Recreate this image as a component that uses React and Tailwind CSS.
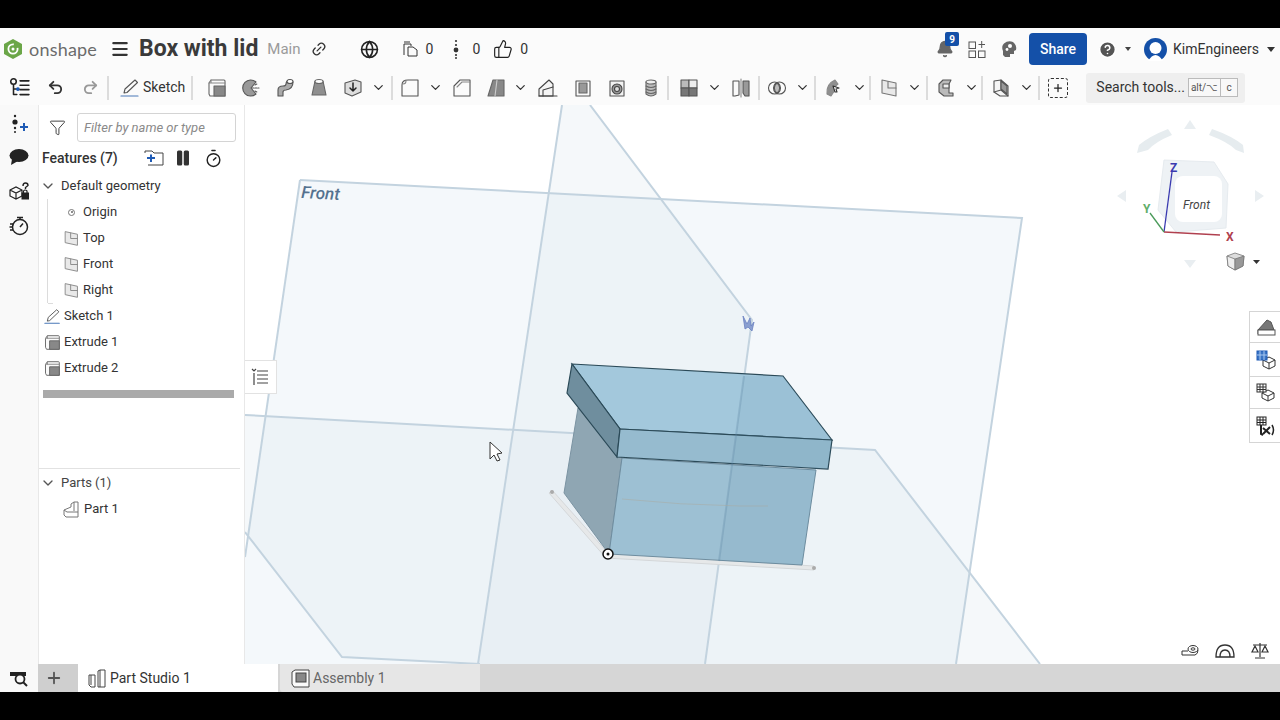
import React from "react";
import { ChevronDown, Undo2, Redo2, Menu, Link2, Globe, ThumbsUp, Filter, Pause, Timer, Bell, CircleHelp, Plus } from "lucide-react";

const Ic = ({ s = 20, className = "", children }) => (
  <svg width={s} height={s} viewBox="0 0 20 20" fill="none" stroke="currentColor" strokeWidth="1.1" strokeLinejoin="round" strokeLinecap="round" className={"shrink-0 " + className}>
    {children}
  </svg>
);

const Chev = () => <ChevronDown size={15} strokeWidth={2} className="text-[#333] shrink-0" />;
const Sep = () => <div className="w-[2px] h-[24px] bg-[#dcdcdc] shrink-0" />;

const ExtrudeIcon = ({ s = 20 }) => (
  <Ic s={s}>
    <path d="M2 5 L4 2 H17 Q18 2 18 3 V18 H3 L2 16 Z" fill="#fafafa" stroke="#666" />
    <path d="M4 2 V5 H2 M4 5 H18" stroke="#888" />
    <rect x="7" y="8" width="11" height="10" fill="#888" stroke="#666" />
  </Ic>
);
const RevolveIcon = () => (
  <Ic>
    <path d="M15 4 A8 8 0 1 0 15 16 L10 10 Z" fill="#999" stroke="#555" />
    <path d="M11 10 h7 M14 7 l2 -1 M14 13 l2 1" stroke="#555" strokeDasharray="2 1" />
  </Ic>
);
const SweepIcon = () => (
  <Ic>
    <path d="M3 18 V12 Q3 8 8 8 Q11 8 11 6 Q11 3 14 2 L18 4 Q18 11 11 12 Q8 12 8 14 V18 Z" fill="#aaa" stroke="#555" />
    <ellipse cx="15" cy="3.5" rx="3" ry="2" fill="#fff" stroke="#555" />
  </Ic>
);
const LoftIcon = () => (
  <Ic>
    <path d="M6 3 H14 L17 17 H3 Z" fill="#8f8f8f" stroke="#666" />
    <ellipse cx="10" cy="3.5" rx="4" ry="2" fill="#fff" stroke="#666" />
  </Ic>
);
const ThickenIcon = () => (
  <Ic>
    <path d="M2 5 L12 2 L18 4 V14 L9 18 L2 15 Z" fill="#ddd" stroke="#555" />
    <path d="M10 5 v8 M7 10 l3 3 l3 -3" stroke="#222" strokeWidth="1.5" />
  </Ic>
);
const FilletIcon = () => (
  <Ic>
    <path d="M2 18 V7 Q2 2 8 2 H18 V18 Z" stroke="#555" />
    <path d="M3 6 Q6 6 6 3" stroke="#888" />
  </Ic>
);
const ChamferIcon = () => (
  <Ic>
    <path d="M2 18 V8 L8 2 H18 V18 Z" stroke="#555" />
    <path d="M5 9 L10 4 H18" stroke="#888" />
  </Ic>
);
const DraftIcon = () => (
  <Ic>
    <path d="M7 2 H18 V18 H2 Z" fill="#888" stroke="#666" />
    <path d="M11 2 L9 18" stroke="#ccc" />
  </Ic>
);
const RibIcon = () => (
  <Ic>
    <path d="M1 18 V11 L11 2 L15 6 V18 Z" fill="#f5f5f5" stroke="#444" />
    <path d="M5 18 V12 L15 9" fill="none" stroke="#444" />
    <path d="M1 18 H19" stroke="#444" />
  </Ic>
);
const ShellIcon = () => (
  <Ic>
    <path d="M3 3 H17 V18 H3 Z" fill="#fafafa" stroke="#555" />
    <rect x="6" y="5" width="8" height="10" fill="#999" stroke="#666" />
  </Ic>
);
const HoleIcon = () => (
  <Ic>
    <path d="M3 3 H17 V18 H3 Z" fill="#f2f2f2" stroke="#555" />
    <circle cx="10" cy="11" r="5" fill="#999" stroke="#444" />
    <circle cx="10" cy="11" r="2.5" fill="#ddd" stroke="#444" />
  </Ic>
);
const HelixIcon = () => (
  <Ic>
    <path d="M5 4 V16 Q10 20 15 16 V4" fill="#bbb" stroke="#666" />
    <ellipse cx="10" cy="4" rx="5" ry="2" fill="#eee" stroke="#666" />
    <path d="M5 8 Q10 11 15 8 M5 11 Q10 14 15 11 M5 14 Q10 17 15 14" stroke="#666" />
  </Ic>
);
const PatternIcon = () => (
  <Ic>
    <rect x="2" y="2" width="8" height="8" fill="#bbb" stroke="#555" />
    <rect x="10" y="2" width="8" height="8" fill="#eee" stroke="#555" />
    <rect x="2" y="10" width="8" height="8" fill="#777" stroke="#555" />
    <rect x="10" y="10" width="8" height="8" fill="#777" stroke="#555" />
  </Ic>
);
const MirrorIcon = () => (
  <Ic>
    <path d="M2 3 H8 V17 L4 18 H2 Z" fill="#fafafa" stroke="#555" />
    <path d="M12 3 H18 V18 H14 L12 15 Z" fill="#999" stroke="#555" />
    <path d="M10 1 V19" stroke="#888" />
  </Ic>
);
const BooleanIcon = () => (
  <Ic>
    <circle cx="7.5" cy="10" r="6" stroke="#555" />
    <circle cx="12.5" cy="10" r="6" stroke="#555" />
    <path d="M10 5 A6 6 0 0 1 10 15 A6 6 0 0 1 10 5" fill="#bbb" stroke="#555" />
  </Ic>
);
const SplitIcon = () => (
  <Ic>
    <path d="M3 16 Q2 6 11 2 L14 6 Q10 9 11 12 L7 18 Z" fill="#8f8f8f" stroke="#888" />
    <path d="M9 8 L15 10 L12 11 L13 14 L11 14 L10 11 Z" fill="#fff" stroke="#333" />
  </Ic>
);
const PlaneIcon = ({ s = 20, tint = "#777" }) => (
  <Ic s={s}>
    <path d="M3 2 L17 5 V18 L3 15 Z" fill="#e9e9e9" stroke={tint} />
    <path d="M9 3.5 V10 H17" stroke={tint} />
  </Ic>
);
const TransformIcon = () => (
  <Ic>
    <path d="M3 6 L7 2 H15 L13 6 V15 L17 15 V18 H8 L3 14 Z" fill="#bbb" stroke="#555" />
    <path d="M7 6 H13 V10 H7 Z" fill="#eee" stroke="#555" />
  </Ic>
);
const ReplaceIcon = () => (
  <Ic>
    <path d="M3 3 L10 2 L17 8 V18 L9 18 L3 14 Z" fill="#f5f5f5" stroke="#555" />
    <path d="M10 2 V12 L17 18 M10 12 L3 14" stroke="#555" />
    <path d="M10 3 L16 8 V16 L10 11 Z" fill="#999" stroke="#555" />
  </Ic>
);
const TreeIcon = () => (
  <Ic s={22}>
    <circle cx="5" cy="4" r="2.5" stroke="#222" strokeWidth="1.4" />
    <path d="M5 7 V16 H8 M5 11 H8" stroke="#222" strokeWidth="1.4" />
    <circle cx="9" cy="11" r="1.2" fill="#1f5bb5" stroke="#1f5bb5" />
    <path d="M11 3.5 H19 M11 7.5 H19 M11 11.5 H19 M11 16 H19" stroke="#222" strokeWidth="1.5" />
  </Ic>
);
const SketchIcon = ({ s = 20 }) => (
  <Ic s={s}>
    <path d="M4 15 L5 11 L15 2 L17.5 4.5 L7 14.5 Z" stroke="#555" />
    <path d="M1 18 H18" stroke="#4a78b8" strokeWidth="1.2" />
  </Ic>
);

const Tool = ({ children, w = "w-[34px]" }) => <div className={"flex items-center justify-center shrink-0 " + w}>{children}</div>;

// icon + dropdown chevron, the groups right of the boolean tool share this spacing
const Group = ({ icon, mr = "mr-[2px]" }) => (
  <>
    <Tool w="w-[20px]">{icon}</Tool>
    <Tool w={"w-[16px] ml-[7px] " + mr}><Chev /></Tool>
  </>
);

const Header = () => (
  <div className="h-[42px] shrink-0 flex items-center bg-[#fbfbfb] text-[#333]">
    <svg width="20" height="20" viewBox="0 0 20 20" className="ml-[3px] shrink-0">
      <path d="M10 0 L19 5 V15 L10 20 L1 15 V5 Z" fill="#6ba648" />
      <circle cx="10" cy="10" r="4.6" fill="none" stroke="#fff" strokeWidth="1.8" strokeDasharray="22 5" />
      <circle cx="10" cy="10" r="1.5" fill="#fff" />
    </svg>
    <span className="ml-[6px] w-[70px] text-[18px] tracking-[0.2px] text-[#6b6b6b] font-['Lato',sans-serif]">onshape</span>
    <Menu size={20} strokeWidth={2.6} className="ml-[11px] text-[#333]" />
    <span className="ml-[9px] text-[23px] font-bold text-[#3a3a3a] whitespace-nowrap">Box with lid</span>
    <span className="ml-[9px] text-[15px] text-[#9a9a9a]">Main</span>
    <Link2 size={16} className="ml-[10px] -rotate-45 text-[#333]" />
    <Globe size={19} className="ml-[33px] text-[#222]" />
    <svg width="18" height="18" viewBox="0 0 18 18" fill="none" stroke="#333" className="ml-[22px] shrink-0">
      <path d="M3 15 V4 H10 V6 M7 7 H12 L16 10 V16 H7 Z" />
      <path d="M3 2 H9" />
    </svg>
    <span className="ml-[7px] text-[14px]">0</span>
    <svg width="6" height="20" viewBox="0 0 6 20" className="ml-[20px] shrink-0">
      <circle cx="3" cy="2" r="1.1" fill="#333" />
      <circle cx="3" cy="6" r="1.1" fill="#333" />
      <circle cx="3" cy="11" r="2.4" fill="#333" />
      <circle cx="3" cy="16" r="1.1" fill="#333" />
      <circle cx="3" cy="19" r="1" fill="#333" />
    </svg>
    <span className="ml-[13px] text-[14px]">0</span>
    <ThumbsUp size={20} strokeWidth={1.4} className="ml-[13px] text-[#222]" />
    <span className="ml-[7px] text-[14px]">0</span>

    <div className="ml-auto flex items-center">
      <div className="relative">
        <Bell size={18} fill="#666" className="text-[#666]" />
        <span className="absolute -top-[8px] left-[9px] w-[14px] h-[14px] rounded-[2px] bg-[#1450a8] text-white text-[10px] font-bold flex items-center justify-center">9</span>
      </div>
      <svg width="18" height="18" viewBox="0 0 18 18" fill="none" stroke="#555" className="ml-[14px] shrink-0">
        <rect x="1" y="2" width="6.5" height="6.5" />
        <rect x="1" y="11" width="6.5" height="6.5" />
        <rect x="10.5" y="11" width="6.5" height="6.5" />
        <path d="M13.7 1 V8 M10.5 4.5 H17" />
      </svg>
      <svg width="18" height="18" viewBox="0 0 18 18" className="ml-[14px] shrink-0">
        <path d="M3 15 V11 Q1 6 4 3.5 Q8 0 13 2 Q17 5 16 10 L14 11 V14 L10 14 V17 H5 Z" fill="#666" />
        <circle cx="10" cy="6" r="2" fill="#fff" />
        <circle cx="7" cy="9.5" r="1.4" fill="#fff" />
      </svg>
      <button className="ml-[11px] w-[58px] h-[32px] rounded-[4px] bg-[#1450a8] text-white text-[14px] font-medium">Share</button>
      <CircleHelp size={19} fill="#555" className="ml-[11px] text-white" />
      <span className="ml-[8px] w-0 h-0 border-x-[3.5px] border-x-transparent border-t-[4px] border-t-[#444]" />
      <svg width="23" height="23" viewBox="0 0 23 23" className="ml-[13px] shrink-0">
        <circle cx="11.5" cy="11.5" r="11.5" fill="#1450a8" />
        <circle cx="11.5" cy="10" r="6" fill="#fff" />
        <path d="M4 23 Q11.5 11 19 23 Z" fill="#fff" />
      </svg>
      <span className="ml-[6px] text-[14px] text-[#333]">KimEngineers</span>
      <span className="ml-[8px] mr-[5px] w-0 h-0 border-x-[4px] border-x-transparent border-t-[5px] border-t-[#333]" />
    </div>
  </div>
);

const Toolbar = () => (
  <div className="h-[35px] shrink-0 flex items-center bg-[#fbfbfb]">
    <Tool w="w-[38px]"><TreeIcon /></Tool>
    <Undo2 size={17} strokeWidth={2.6} className="ml-[9px] text-[#333]" />
    <Redo2 size={17} strokeWidth={2.6} className="ml-[18px] text-[#999]" />
    <div className="ml-[8px]"><Sep /></div>
    <div className="ml-[11px]"><SketchIcon /></div>
    <span className="ml-[3px] text-[14px] text-[#333]">Sketch</span>
    <div className="ml-[6px] mr-[7px]"><Sep /></div>
    <Tool><ExtrudeIcon /></Tool>
    <Tool><RevolveIcon /></Tool>
    <Tool><SweepIcon /></Tool>
    <Tool><LoftIcon /></Tool>
    <Tool><ThickenIcon /></Tool>
    <Tool w="w-[16px]"><Chev /></Tool>
    <div className="ml-[5px] mr-[7px]"><Sep /></div>
    <Tool w="w-[20px]"><FilletIcon /></Tool>
    <Tool w="w-[30px]"><Chev /></Tool>
    <Tool w="w-[24px]"><ChamferIcon /></Tool>
    <div className="w-[12px]" />
    <Tool w="w-[20px]"><DraftIcon /></Tool>
    <Tool w="w-[28px]"><Chev /></Tool>
    <div className="w-[2px]" />
    <Tool w="w-[24px]"><RibIcon /></Tool>
    <Tool w="w-[46px]"><ShellIcon /></Tool>
    <Tool w="w-[22px]"><HoleIcon /></Tool>
    <Tool w="w-[46px]"><HelixIcon /></Tool>
    <div className="-ml-[7px] mr-[10px]"><Sep /></div>
    <Tool w="w-[20px]"><PatternIcon /></Tool>
    <Tool w="w-[30px]"><Chev /></Tool>
    <Tool w="w-[24px]"><MirrorIcon /></Tool>
    <div className="ml-[5px] mr-[7px]"><Sep /></div>
    <Group icon={<BooleanIcon />} mr="mr-[4px]" />
    <Sep />
    <div className="w-[8px]" />
    <Group icon={<SplitIcon />} />
    <Sep />
    <div className="w-[8px]" />
    <Group icon={<PlaneIcon />} mr="mr-[4px]" />
    <Sep />
    <div className="w-[8px]" />
    <Group icon={<TransformIcon />} />
    <Sep />
    <div className="w-[8px]" />
    <Group icon={<ReplaceIcon />} mr="mr-[4px]" />
    <Sep />
    <div className="w-[8px] shrink-0" />
    <div className="relative w-[20px] h-[20px] border border-dashed border-[#333] rounded-[3px] flex items-center justify-center shrink-0">
      <Plus size={12} strokeWidth={2.5} className="text-[#222]" />
    </div>
    <div className="ml-[18px] w-[159px] h-[30px] rounded-[3px] bg-[#efefef] flex items-center pl-[10px] text-[14px] text-[#333] shrink-0">
      <span>Search tools...</span>
      <span className="ml-[3px] h-[19px] px-[2px] border border-[#bbb] bg-[#f8f8f8] text-[10px] text-[#555] flex items-center">alt/⌥</span>
      <span className="h-[19px] w-[17px] border border-l-0 border-[#bbb] bg-[#f8f8f8] text-[10px] text-[#555] flex items-center justify-center">c</span>
    </div>
  </div>
);

const Rail = () => (
  <div className="w-[38px] shrink-0 bg-[#f9f9f9] flex flex-col items-center text-[#222] pt-[8px]">
    <svg width="20" height="20" viewBox="0 0 20 20" className="shrink-0">
      <circle cx="6" cy="3" r="1.2" fill="#222" />
      <circle cx="6" cy="9" r="2.6" fill="#222" />
      <circle cx="6" cy="15" r="1.2" fill="#222" />
      <circle cx="6" cy="19" r="1" fill="#222" />
      <path d="M11 14 H19 M15 10 V18" stroke="#1f5bb5" strokeWidth="2" />
    </svg>
    <svg width="20" height="18" viewBox="0 0 20 18" className="mt-[15px] shrink-0">
      <ellipse cx="10" cy="7.5" rx="9.5" ry="6.5" fill="#222" />
      <path d="M3 11 L2 17 L9 13 Z" fill="#222" />
    </svg>
    <svg width="22" height="22" viewBox="0 0 22 22" fill="none" stroke="#222" className="mt-[15px] shrink-0">
      <path d="M2 9 L8 6 L14 9 V15 L8 18 L2 15 Z M2 9 L8 12 L14 9 M8 12 V18" strokeWidth="1.2" />
      <rect x="14" y="12" width="6.5" height="6" fill="#222" />
      <path d="M15.5 12 V10 Q17 8 19 10 V12" strokeWidth="1.2" />
      <path d="M15 5 Q15 2 17.5 2 Q20 2 20 4.5 L17.5 6.5 V8" strokeWidth="1.4" />
    </svg>
    <svg width="20" height="20" viewBox="0 0 20 20" fill="none" stroke="#222" strokeWidth="1.5" className="mt-[13px] shrink-0">
      <circle cx="11" cy="11" r="7.5" />
      <path d="M8 1.5 H14 M11 1.5 V3.5 M11 11 L14 7.5 M1 8 H4 M0.5 11 H3.5 M1 14 H4" />
    </svg>
  </div>
);

const Row = ({ icon, label, ml = "ml-[5px]", text = "ml-[3px]" }) => (
  <div className={"h-[26px] flex items-center text-[13px] text-[#333] " + ml}>
    {icon}
    <span className={text}>{label}</span>
  </div>
);

const Panel = () => (
  <div className="w-[207px] shrink-0 bg-white border-x border-[#e8e8e8] flex flex-col">
    <div className="h-[37px] flex items-center shrink-0 pt-[8px]">
      <Filter size={17} strokeWidth={1.3} className="ml-[10px] text-[#333]" />
      <div className="ml-[11px] w-[159px] h-[29px] border border-[#d4d4d4] rounded-[3px] flex items-center pl-[6px] text-[13px] italic text-[#8a8a8a]">Filter by name or type</div>
    </div>
    <div className="h-[30px] shrink-0 mt-[1px] flex items-center pl-[3px] text-[#333]">
      <span className="w-[100px] text-[14px] font-medium">Features (7)</span>
      <svg width="20" height="18" viewBox="0 0 20 18" fill="none" stroke="#444" className="ml-[2px] shrink-0">
        <path d="M1 4 V2 H8 L10 4 H19 V16 H4" />
        <path d="M3 9 H11 M7 5.5 V13" stroke="#1f5bb5" strokeWidth="2" />
      </svg>
      <Pause size={18} fill="#333" className="ml-[10px] text-[#333]" />
      <Timer size={19} strokeWidth={1.8} className="ml-[12px] text-[#222]" />
    </div>
    <div className="h-[26px] shrink-0 flex items-center text-[13px] text-[#333]">
      <ChevronDown size={16} strokeWidth={2} className="ml-[1px] text-[#555]" />
      <span className="ml-[5px]">Default geometry</span>
    </div>
    <div className="relative ml-[8px] h-[104px] shrink-0 border-l border-[#dcdcdc]">
      <div className="absolute left-0 -bottom-[1px] w-[5px] h-px bg-[#dcdcdc]" />
      <div className="ml-[16px] h-[26px] flex items-center text-[13px] text-[#333]">
        <span className="w-[7px] h-[7px] rounded-full border border-[#777] flex items-center justify-center shrink-0 ml-[4px]"><span className="w-[2px] h-[2px] rounded-full bg-[#666]" /></span>
        <span className="ml-[8px]">Origin</span>
      </div>
      <Row icon={<PlaneIcon s={17} tint="#888" />} label="Top" ml="ml-[15px]" />
      <Row icon={<PlaneIcon s={17} tint="#888" />} label="Front" ml="ml-[15px]" />
      <Row icon={<PlaneIcon s={17} tint="#888" />} label="Right" ml="ml-[15px]" />
    </div>
    <Row icon={<SketchIcon s={17} />} label="Sketch 1" />
    <Row icon={<ExtrudeIcon s={17} />} label="Extrude 1" />
    <Row icon={<ExtrudeIcon s={17} />} label="Extrude 2" />
    <div className="mx-[4px] mt-[9px] w-[191px] h-[8px] bg-[#aaaaaa] shrink-0" />
    <div className="mt-[70px] w-[201px] h-px bg-[#e2e2e2] shrink-0" />
    <div className="h-[26px] mt-[1px] shrink-0 flex items-center text-[13px] text-[#444]">
      <ChevronDown size={16} strokeWidth={2} className="ml-[1px] text-[#555]" />
      <span className="ml-[5px]">Parts (1)</span>
    </div>
    <div className="h-[26px] shrink-0 flex items-center ml-[24px] text-[13px] text-[#333]">
      <svg width="17" height="17" viewBox="0 0 17 17" fill="none" stroke="#777" className="shrink-0">
        <path d="M1 9 L8 6 V3 L11 1 H15 V16 H3 L1 14 Z M1 9 L4 11 H15 M11 1 V10" />
      </svg>
      <span className="ml-[4px]">Part 1</span>
    </div>
  </div>
);

const Scene = () => (
  <svg viewBox="245 105 1035 559" className="absolute inset-0 w-full h-full">
    <polygon points="300,180 1022,218 956,664 245,664 245,557" fill="#e4eef4" fillOpacity="0.4" />
    <polygon points="245,415 875,450 1040,664 480,664 342,657 245,532" fill="#dfe9f0" fillOpacity="0.3" />
    <polygon points="562,105 590,105 752,320 705,664 478,664" fill="#dfe8ef" fillOpacity="0.3" />
    <g fill="none" stroke="#c3d3df" strokeWidth="2">
      <path d="M300,180 L1022,218 L956,664" />
      <path d="M300,180 L245,557" />
      <path d="M245,415 L875,450 L1040,664" />
      <path d="M245,532 L342,657 L480,664" />
      <path d="M562,105 L478,664" />
      <path d="M590,105 L752,320 L705,664" />
    </g>
    <text x="301" y="198" transform="rotate(3 301 198)" fontSize="17" fontWeight="500" fontStyle="italic" fill="#54728f" fontFamily="Roboto, sans-serif">Front</text>
    <path d="M743,316 l4,8 l3,-6 l1,8 l3,-4 l-2,9 l-4,-4 l-3,2 Z" fill="#8a9fd0" stroke="#6a80c0" strokeWidth="0.8" />

    <polygon points="552,490 608,553 814,566 814,570 606,558 549,493" fill="#e6e8e9" stroke="#d4d7d9" />
    <circle cx="552" cy="492" r="2" fill="#aaa" />
    <circle cx="814" cy="568" r="2" fill="#aaa" />

    <polygon points="578,408 622,458 609,554 564,493" fill="#8fa6b3" stroke="#7b93a2" />
    <polygon points="622,458 816,470 802,565 609,554" fill="#9dc0d3" stroke="#6f8d9f" />
    <polygon points="572,364 783,376 832,440 620,429" fill="#a3c8dc" stroke="#2b4a58" strokeWidth="1.2" />
    <polygon points="572,364 620,429 617,457 567,393" fill="#6f8e9e" stroke="#2b4a58" strokeWidth="1.2" />
    <polygon points="620,429 832,440 828,469 617,457" fill="#96bbcf" stroke="#2b4a58" strokeWidth="1.2" />
    <polygon points="744,376 783,376 832,440 828,469 816,470 802,565 719,561" fill="#5d86a3" fillOpacity="0.1" />
    <path d="M744,376 L719,561" stroke="#5d86a3" strokeOpacity="0.3" strokeWidth="2" fill="none" />
    <path d="M622,499 Q680,505 740,506 L768,506" stroke="#a9a9a0" strokeOpacity="0.5" fill="none" />
    <circle cx="608" cy="554" r="5" fill="#fff" stroke="#111" strokeWidth="1.5" />
    <circle cx="608" cy="554" r="1.5" fill="#111" />

    <path d="M490,442 L490,459 L494,455 L497,461 L500,460 L497,454 L502,453 Z" fill="#fff" stroke="#333" />

    {/* nav cube */}
    <g fill="#e9eef1">
      <polygon points="1190,120 1184,129 1196,129" />
      <polygon points="1190,268 1184,260 1196,260" />
      <polygon points="1117,196 1126,190 1126,202" />
      <polygon points="1264,196 1255,190 1255,202" />
    </g>
    <path d="M1137,153 L1139,145 Q1150,136 1168,129 L1172,135 Q1155,142 1148,150 Z" fill="#e6ecef" />
    <path d="M1244,153 L1243,145 Q1232,136 1212,129 L1209,135 Q1228,142 1236,150 Z" fill="#e6ecef" />
    <polygon points="1164,160 1214,162 1228,184 1226,228 1176,232 1158,210" fill="#eef2f5" stroke="#e6ebef" />
    <rect x="1175" y="176" width="47" height="46" rx="8" fill="#fff" />
    <text x="1183" y="209" fontSize="12" fontStyle="italic" fill="#444" fontFamily="Roboto, sans-serif">Front</text>
    <path d="M1164,232 L1172,172" stroke="#3a3ab0" strokeWidth="1.3" />
    <path d="M1164,232 L1220,235" stroke="#b0404f" strokeWidth="1.3" />
    <path d="M1164,232 L1150,213" stroke="#4a9a5a" strokeWidth="1.3" />
    <text x="1170" y="172" fontSize="12" fontWeight="700" fill="#3a3ab0" fontFamily="Roboto, sans-serif">Z</text>
    <text x="1226" y="241" fontSize="12" fontWeight="700" fill="#b0404f" fontFamily="Roboto, sans-serif">X</text>
    <text x="1143" y="213" fontSize="12" fontWeight="700" fill="#5fae6a" fontFamily="Roboto, sans-serif">Y</text>
    <g stroke="#777" strokeWidth="0.8">
      <polygon points="1227,256 1235,253 1244,256 1243,266 1235,270 1228,266" fill="#ddd" />
      <polygon points="1227,256 1235,259 1235,270 1228,266" fill="#eee" />
      <polygon points="1235,259 1244,256 1243,266 1235,270" fill="#999" />
    </g>
    <polygon points="1253,260 1260,260 1256.5,264" fill="#333" />
  </svg>
);

const SideTabs = () => (
  <div className="absolute right-0 top-[206px] w-[31px] bg-white border border-r-0 border-[#d5d5d5]">
    <div className="h-[31px] border-b border-[#d5d5d5] flex items-center justify-center">
      <svg width="20" height="20" viewBox="0 0 20 20" fill="none" stroke="#555" className="ml-[2px]">
        <path d="M2 17 V13 L11 3 L15 5 L18 13 H2" fill="#777" />
        <rect x="2" y="13" width="17" height="5" fill="#fff" />
      </svg>
    </div>
    <div className="h-[34px] border-b border-[#d5d5d5] flex items-center justify-center">
      <svg width="20" height="20" viewBox="0 0 20 20" fill="none" stroke="#333" className="ml-[2px]">
        <path d="M7 10 L13 7 L19 10 V16 L13 19 L7 16 Z M7 10 L13 13 L19 10 M13 13 V19" />
        <rect x="1" y="1" width="10" height="9" fill="#3a74c4" stroke="#1f5bb5" />
        <path d="M4 1 V10 M8 1 V10 M1 5 H11" stroke="#a8c8f0" />
      </svg>
    </div>
    <div className="h-[32px] border-b border-[#d5d5d5] flex items-center justify-center">
      <svg width="20" height="20" viewBox="0 0 20 20" fill="none" stroke="#333" className="ml-[2px]">
        <path d="M6 10 L12 7 L18 10 V15 L12 18 L6 15 Z M6 10 L12 13 L18 10 M12 13 V18" />
        <rect x="1" y="1" width="9" height="8" fill="#fff" />
        <path d="M4 1 V9 M7 1 V9 M1 4 H10 M1 6.5 H10" />
      </svg>
    </div>
    <div className="h-[33px] flex items-center justify-center">
      <svg width="20" height="20" viewBox="0 0 20 20" fill="none" stroke="#222" className="ml-[2px]">
        <rect x="1" y="1" width="9" height="8" />
        <path d="M4 1 V9 M7 1 V9 M1 4 H10 M1 6.5 H10" />
        <path d="M5 9 V18 L7 19 M7 12 L14 18 M14 11 L7 18" strokeWidth="2" />
        <path d="M16 9 Q19 14 16 19" strokeWidth="1.5" />
      </svg>
    </div>
  </div>
);

const MeasureIcons = () => (
  <div className="absolute right-[11px] bottom-[4px] flex items-center gap-[16px] text-[#333]">
    <svg width="18" height="16" viewBox="0 0 18 16" fill="none" stroke="#333">
      <ellipse cx="12" cy="6" rx="5" ry="3.5" />
      <ellipse cx="12" cy="6" rx="2" ry="1.2" />
      <path d="M7 8 H1 V12 H14 Q17 11 17 7" />
    </svg>
    <svg width="20" height="16" viewBox="0 0 20 16" fill="none" stroke="#333" strokeWidth="1.3">
      <path d="M1 14 Q1 2 10 2 Q19 2 19 14 Z" />
      <path d="M5 14 Q5 7 10 7 Q15 7 15 14" />
    </svg>
    <svg width="18" height="18" viewBox="0 0 18 18" fill="none" stroke="#333" strokeWidth="1.2">
      <path d="M2 3 H16 M9 1 V15 M4 16 H14" />
      <path d="M4 4 L1 10 H7 Z M14 4 L11 10 H17 Z" />
    </svg>
  </div>
);

const Viewport = () => (
  <div className="relative flex-1 bg-white overflow-hidden">
    <Scene />
    <div className="absolute left-0 top-[255px] w-[32px] h-[34px] bg-white border border-l-0 border-[#e2e2e2] flex items-center justify-center">
      <svg width="18" height="18" viewBox="0 0 18 18" fill="none" stroke="#444" strokeWidth="1.2" className="-ml-[2px]">
        <path d="M1 1 L3 3 L5 1 M3 5 V17 M6 3 H17 M6 7 H17 M6 11 H17 M6 15 H17" />
      </svg>
    </div>
    <SideTabs />
    <MeasureIcons />
  </div>
);

const Tabs = () => (
  <div className="h-[28px] shrink-0 flex bg-[#d6d6d6] text-[14px]">
    <div className="w-[38px] bg-[#f9f9f9] flex items-center justify-center">
      <svg width="20" height="18" viewBox="0 0 20 18" className="shrink-0">
        <path d="M1 3 H17 V7 H1 Z" fill="#222" />
        <circle cx="11" cy="10" r="4.5" fill="#f9f9f9" stroke="#222" strokeWidth="1.8" />
        <path d="M14 13 L18 17" stroke="#222" strokeWidth="2" />
      </svg>
    </div>
    <div className="w-[40px] bg-[#cfcfcf] flex items-center justify-center">
      <Plus size={18} strokeWidth={2.4} className="text-[#555] mr-[8px]" />
    </div>
    <div className="w-[200px] bg-white flex items-center pl-[10px] text-[#333]">
      <svg width="19" height="19" viewBox="0 0 19 19" fill="none" stroke="#444" className="shrink-0">
        <path d="M1 6 H7 V18 H3 L1 16 Z M10 2 L12 1 H17 V18 H10 Z" />
        <path d="M3 6 V16 M12 1 V18" />
      </svg>
      <span className="ml-[3px] pt-[1px]">Part Studio 1</span>
    </div>
    <div className="ml-[2px] w-[200px] bg-[#e6e6e6] rounded-bl-[3px] flex items-center pl-[11px] text-[#666]">
      <svg width="19" height="19" viewBox="0 0 19 19" fill="none" stroke="#444" className="shrink-0">
        <path d="M1 3 L4 1 H18 V18 H3 L1 15 Z" fill="#fafafa" />
        <rect x="5" y="4" width="10" height="9" fill="#888" />
      </svg>
      <span className="ml-[3px] pt-[1px]">Assembly 1</span>
    </div>
  </div>
);

export default function App() {
  return (
    <div className="w-[1280px] h-[720px] overflow-hidden bg-black flex flex-col py-[28px] font-['Roboto',sans-serif]">
      <Header />
      <Toolbar />
      <div className="flex-1 min-h-0 flex">
        <Rail />
        <Panel />
        <Viewport />
      </div>
      <Tabs />
    </div>
  );
}
